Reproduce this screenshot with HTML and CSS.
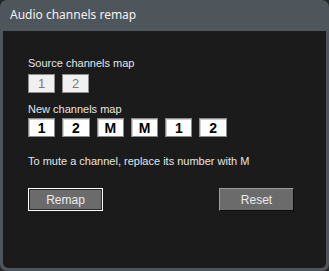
FILE: index.html
```
<!DOCTYPE html>
<html lang="en">
<head>
	<meta charset="UTF-8">
	<title>Audio channels remap</title>
	<link rel="stylesheet" href="styles.css">
</head>
<body>
	<div class="win">
		<div class="title">Audio channels remap</div>
		<div class="content">
			<p class="label first">Source channels map</p>
			<div class="row source">
				<span class="src">1</span>
				<span class="src">2</span>
			</div>
			<p class="label second">New channels map</p>
			<div class="row target">
				<span class="ch">1</span>
				<span class="ch">2</span>
				<span class="ch">M</span>
				<span class="ch">M</span>
				<span class="ch">1</span>
				<span class="ch">2</span>
			</div>
			<p class="label hint">To mute a channel, replace its number with M</p>
			<div class="buttons">
				<button class="btn default">Remap</button>
				<button class="btn">Reset</button>
			</div>
		</div>
	</div>
</body>
</html>
```
FILE: styles.css
```
html, body {margin: 0; padding: 0;}
body {background: #23272a; width: 329px; height: 271px; overflow: hidden;}
.win {display: flex; flex-direction: column; box-sizing: border-box; width: 329px; height: 271px; padding: 0 3px 3px 3px; background: #4e555b; border-radius: 7px;}
.title {height: 31px; padding-left: 7px; color: #f2f2f2; font: 12px/30px "Noto Sans", "Open Sans", sans-serif;}
.content {flex: 1; display: flex; flex-direction: column; align-items: flex-start; background: #1b1b1b; padding-left: 25px; border-radius: 0 0 5px 5px; font-family: "Liberation Sans", Arial, sans-serif;}
.label {margin: 0; height: 13px; font-size: 11px; line-height: 13px; color: #e6e6e6;}
.label.first {margin-top: 26px;}
.label.second {margin-top: 10px;}
.hint {margin-top: 18px;}
.row {display: flex; gap: 7px;}
.row.source {margin-top: 4px;}
.row.target {margin-top: 2px;}
.src, .ch {display: flex; align-items: center; justify-content: center; box-sizing: border-box; width: 27px; height: 19px;}
.src {background: #f0f0f0; border: 1px solid #8f8f8f; color: #7a7a7a; font-size: 13px;}
.ch {width: 27.3px; background: #fff; border: 1px solid #8a8a8a; box-shadow: inset 1px 1px 0 #cfcfcf; color: #000; font-size: 14px; font-weight: bold;}
.buttons {display: flex; justify-content: space-between; width: 266px; margin-top: 20px;}
.btn {box-sizing: border-box; width: 75px; height: 23px; padding: 0; background: #6b6b6b; color: #ececec; font: 12px "Liberation Sans", Arial, sans-serif; border: 1px solid #9c9c9c; border-right-color: #0a0a0a; border-bottom-color: #0a0a0a;}
.btn.default {border: 1px solid #ffffff; box-shadow: inset 0 0 0 1px #2a2a2a;}
```
